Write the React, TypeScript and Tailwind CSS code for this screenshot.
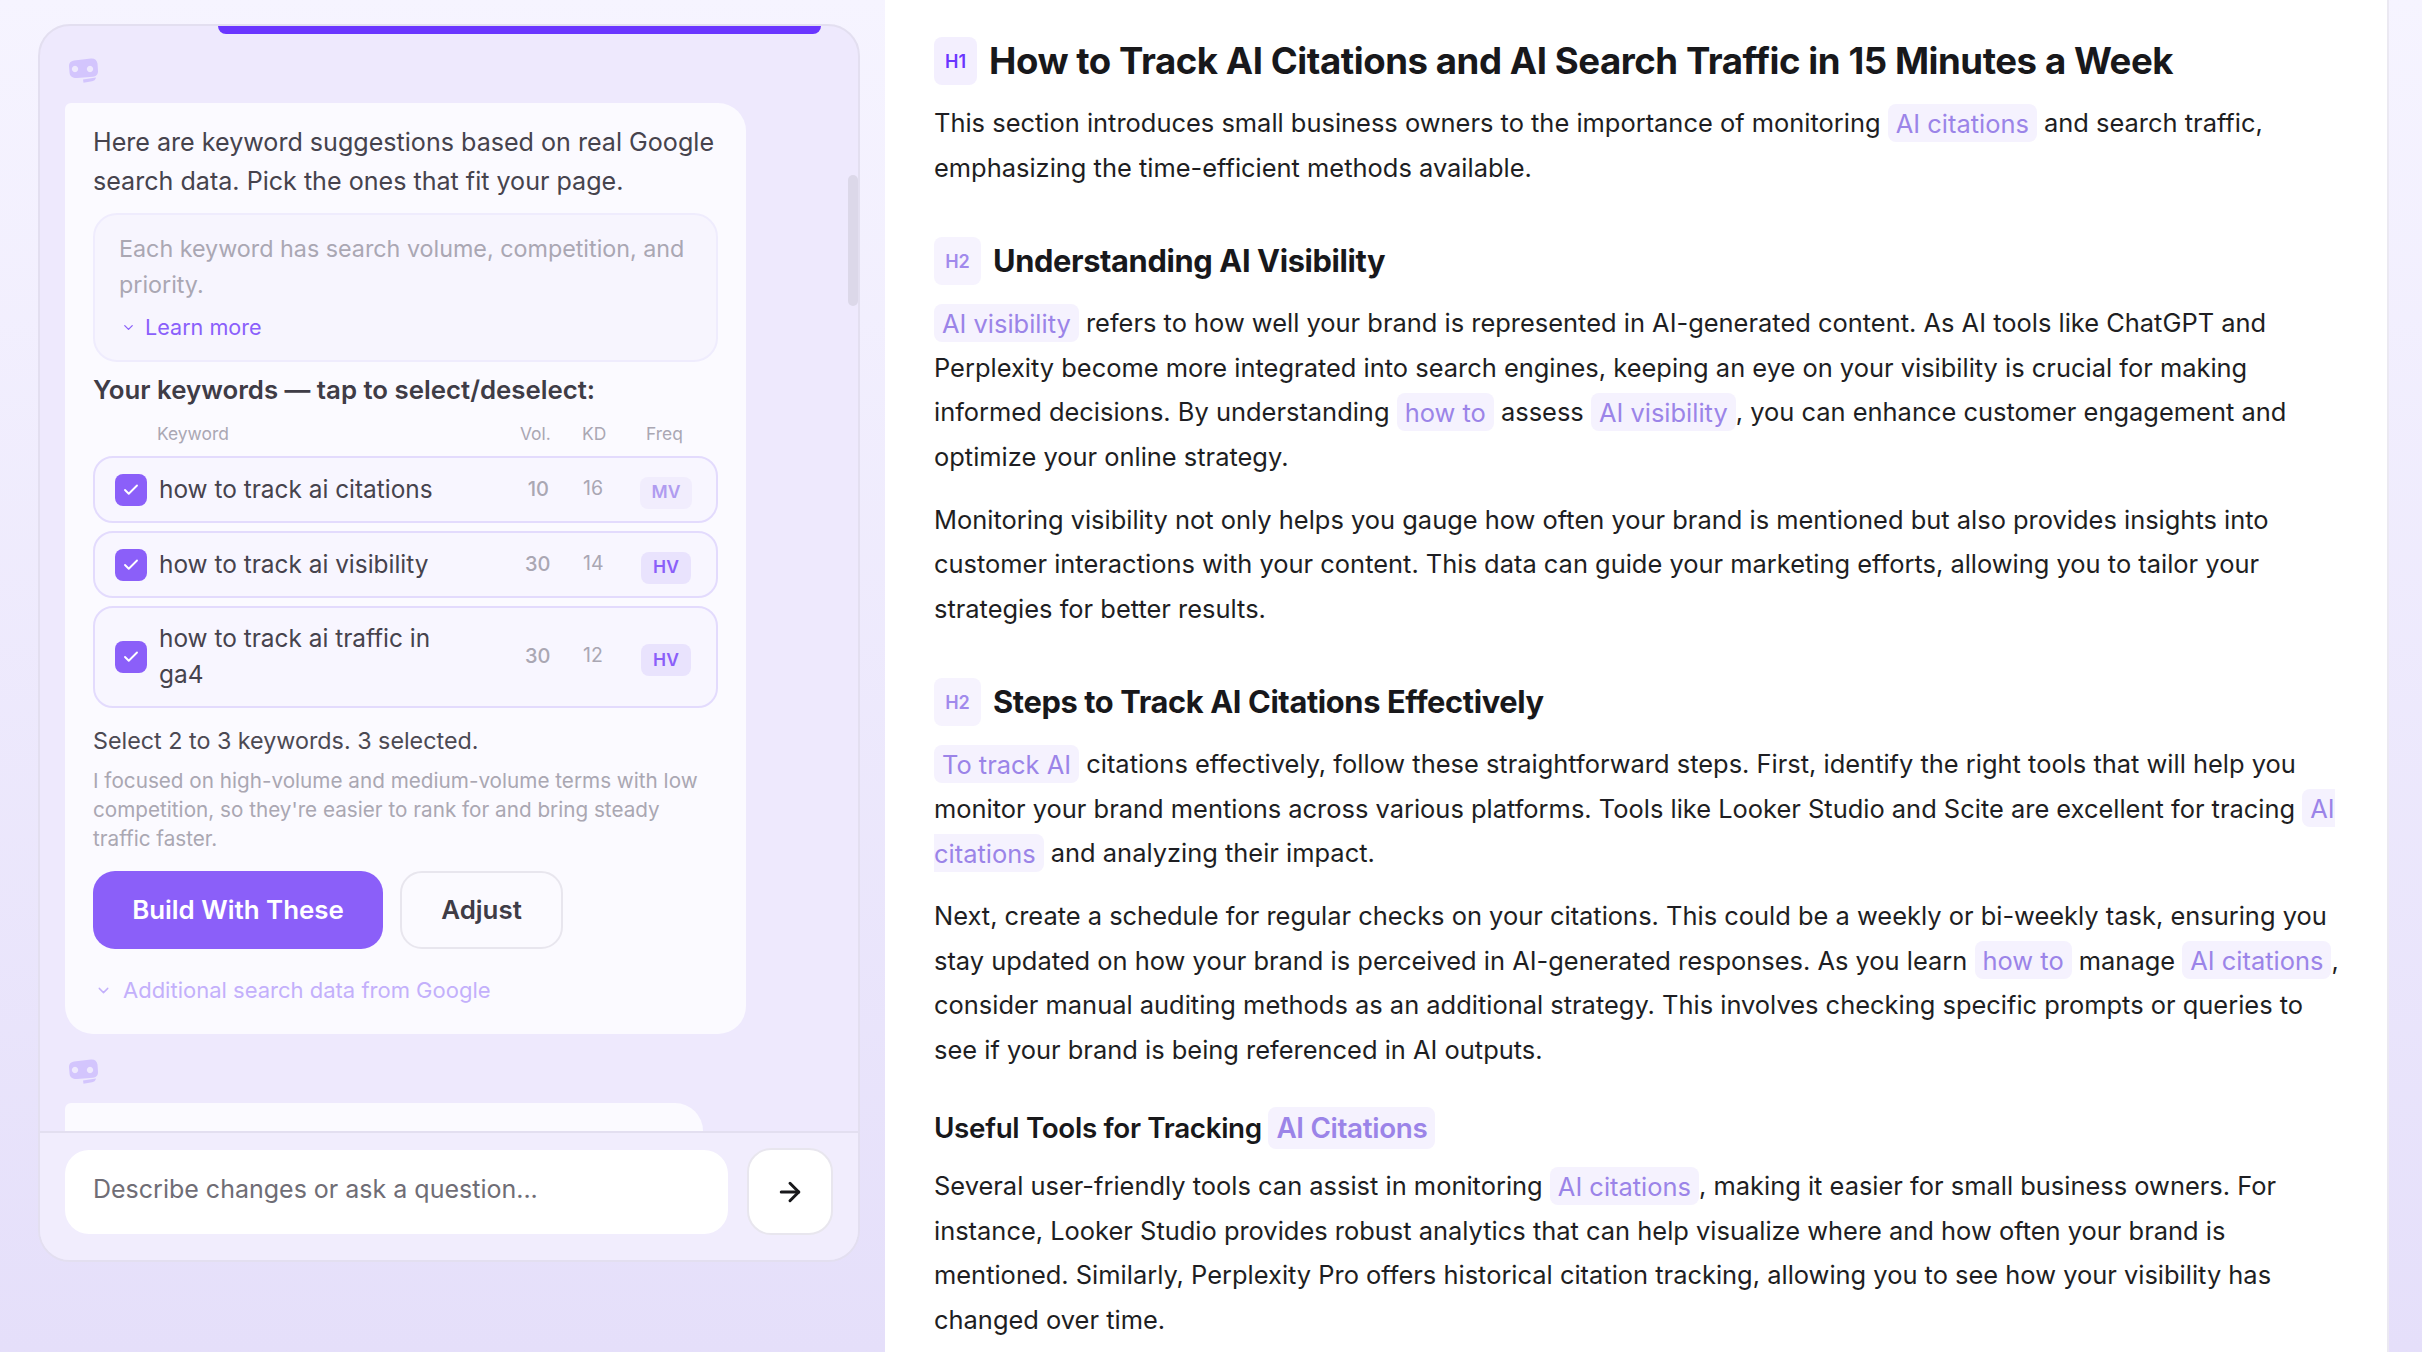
import { ArrowRight, ChevronDown, Check } from 'lucide-react'
import type { ReactNode } from 'react'

const keywords = [
  { id: 1, lines: ['how to track ai citations'], vol: 10, kd: 16, freq: 'MV' },
  { id: 2, lines: ['how to track ai visibility'], vol: 30, kd: 14, freq: 'HV' },
  { id: 3, lines: ['how to track ai traffic in', 'ga4'], vol: 30, kd: 12, freq: 'HV' },
]

function BotIcon() {
  return (
    <svg width="31" height="25" viewBox="0 0 31 25" className="ml-[28px] block">
      <path fillRule="evenodd" fill="#d3c5fd" d="M6 2.5 L23 0.5 C26.5 0.2 29 2 29.5 5.5 L30 13 C30.2 16.5 28 18.5 25 18.8 L9 20 C5 20.2 2 18.5 1.6 15 L1 8 C0.8 5 2.8 3 6 2.5 Z M7 7.8 a3.2 3.2 0 1 0 0.01 0 Z M22 7.8 a3.2 3.2 0 1 0 0.01 0 Z" />
      <path fill="#d3c5fd" d="M15 21.5 L28 19.5 C27.5 22 26 22.8 24 23.2 L15.5 24.8 Z" />
    </svg>
  )
}

function Chip({ children }: { children: ReactNode }) {
  return <span className="rounded-lg bg-[#f5f2fe] px-2 py-[3.5px] text-[#9b84e8]">{children}</span>
}

function Tag({ children, dim }: { children: string; dim?: boolean }) {
  return (
    <span className={`flex h-12 shrink-0 items-center justify-center rounded-lg text-[18px] font-semibold ${dim ? 'w-[47px] bg-[#f6f3fe] text-[#a18aec]' : 'w-[43px] bg-[#f3effe] text-[#6a35ff]'}`}>
      {children}
    </span>
  )
}

function Para({ children }: { children: ReactNode }) {
  return <p className="mb-[18.5px] whitespace-nowrap text-[25.45px] leading-[44.5px] text-[#1e1e22]">{children}</p>
}

function ChatPanel() {
  return (
    <div className="flex h-[1238px] w-[822px] flex-col overflow-hidden rounded-[32px] border-2 border-[#e3dff0] bg-[#eee9fd]">
      <div className="relative flex-1 overflow-hidden">
        <div className="ml-[178px] h-2 w-[603px] rounded-b-2xl bg-[#6a35ff]" />
        <div className="absolute right-0 top-[149px] h-[131px] w-[10px] rounded-full bg-[#dcd8e9]" />

        <div className="mt-[24px]"><BotIcon /></div>

        <div className="ml-[25px] mt-5 h-[931px] w-[681px] rounded-[28px] rounded-tl-md bg-[#fbfaff] px-7 pt-5">
          <p className="whitespace-nowrap text-[25.1px] leading-[39px] text-[#46434d]">
            Here are keyword suggestions based on real Google
            <br />
            search data. Pick the ones that fit your page.
          </p>

          <div className="mt-[12px] h-[149px] w-[625px] rounded-3xl border-2 border-[#efecfd] bg-[#f7f5fe] pl-[24px] pt-[16px]">
            <p className="whitespace-nowrap text-[23.3px] leading-[36px] text-[#aaa7b3]">
              Each keyword has search volume, competition, and
              <br />
              priority.
            </p>
            <div className="mt-[10px] flex items-center gap-[9px] pl-[2px] text-[21.6px] leading-[28px] text-[#8a5ffb]">
              <ChevronDown className="h-[15px] w-[15px]" strokeWidth={2} />
              Learn more
            </div>
          </div>

          <h4 className="mt-[12px] whitespace-nowrap text-[25.8px] font-semibold leading-[32px] text-[#3f3c46]">
            Your keywords — tap to select/deselect:
          </h4>

          <div className="mt-[16px] flex h-6 items-center text-[17.4px] text-[#aaa7b3]">
            <span className="ml-[64px] w-[363px]">Keyword</span>
            <span className="w-[62px]">Vol.</span>
            <span className="w-[64px]">KD</span>
            <span>Freq</span>
          </div>

          <div className="mt-[10px] flex w-[625px] flex-col gap-2">
            {keywords.map(k => (
              <div key={k.id} className="flex min-h-[67px] items-center rounded-[20px] border-2 border-[#e3dbfd] bg-[#f8f6ff] py-3 pl-[20px]">
                <span className="flex h-8 w-8 shrink-0 items-center justify-center rounded-lg bg-[#8b5ff9]">
                  <Check className="h-[18px] w-[18px] text-white" strokeWidth={2.5} />
                </span>
                <span className="ml-[12px] w-[366px] shrink-0 whitespace-nowrap pb-[2px] text-[24.4px] leading-[36px] text-[#46434d]">
                  {k.lines.map((line, i) => <div key={i}>{line}</div>)}
                </span>
                <span className="w-[24px] shrink-0 pb-[2px] text-right text-[20px] font-medium text-[#aaa7b3]">{k.vol}</span>
                <span className="ml-[34px] w-[30px] shrink-0 pb-[2px] text-[19.5px] text-[#aaa7b3]">{k.kd}</span>
                {k.freq === 'MV' ? (
                  <span className="ml-[27px] mt-[6px] flex h-8 w-[52px] shrink-0 items-center justify-center rounded-lg bg-[#f1edfd] text-[17.5px] font-semibold text-[#b09cf0]">{k.freq}</span>
                ) : (
                  <span className="ml-[28px] mt-[6px] flex h-8 w-[50px] shrink-0 items-center justify-center rounded-lg bg-[#e9e3fd] text-[17.5px] font-semibold text-[#8b5ff9]">{k.freq}</span>
                )}
              </div>
            ))}
          </div>

          <p className="mt-[18px] whitespace-nowrap text-[23.3px] leading-[30px] text-[#4c4953]">
            Select 2 to 3 keywords. 3 selected.
          </p>
          <p className="mt-[10px] whitespace-nowrap text-[20.7px] leading-[29px] text-[#aaa7b2]">
            I focused on high-volume and medium-volume terms with low
            <br />
            competition, so they're easier to rank for and bring steady
            <br />
            traffic faster.
          </p>

          <div className="mt-[18px] flex gap-[17px]">
            <button className="h-[78px] w-[290px] rounded-[22px] bg-[#8b5ff9] text-[25.9px] font-semibold text-white">Build With These</button>
            <button className="h-[78px] w-[163px] rounded-[22px] border-2 border-[#e8e6ee] bg-[#fbfaff] text-[25.9px] font-semibold text-[#3f3c46]">Adjust</button>
          </div>

          <div className="mt-[25px] flex items-center gap-[11px] pl-[2px] text-[22px] text-[#c3b0fb]">
            <ChevronDown className="h-[17px] w-[17px]" strokeWidth={2} />
            Additional search data from Google
          </div>
        </div>

        <div className="mt-[25px]"><BotIcon /></div>
        <div className="ml-[25px] mt-[19px] h-10 w-[638px] rounded-t-[28px] rounded-tl-md bg-[#fbfaff]" />
      </div>

      <div className="flex h-[129px] shrink-0 items-start border-t-2 border-[#e3dff0] bg-[#f1edfd] pl-[25px] pt-[17px]">
        <div className="flex h-[84px] w-[663px] items-center rounded-3xl bg-white pb-[5px] pl-7 text-[25px] text-[#6f6d75]">
          Describe changes or ask a question...
        </div>
        <button className="-mt-[2px] ml-[19px] flex h-[87px] w-[86px] items-center justify-center rounded-3xl border-2 border-[#e8e6ee] bg-white">
          <ArrowRight className="h-[30px] w-[30px] text-[#18181b]" strokeWidth={2.4} />
        </button>
      </div>
    </div>
  )
}

function Article() {
  return (
    <div className="h-[1352px] w-[1504px] shrink-0 overflow-hidden border-r-2 border-[#ebe9f2] bg-white pl-[49px] pt-[37px]">
      <div className="flex items-center gap-3">
        <Tag>H1</Tag>
        <h1 className="whitespace-nowrap text-[36.6px] font-bold leading-[48px] tracking-[-0.012em] text-[#18181b]">How to Track AI Citations and AI Search Traffic in 15 Minutes a Week</h1>
      </div>
      <div className="mt-[16px]">
        <Para>
          This section introduces small business owners to the importance of monitoring <Chip>AI citations</Chip> and search traffic,
          <br />
          emphasizing the time-efficient methods available.
        </Para>
      </div>

      <div className="mt-[47px] flex items-center gap-3">
        <Tag dim>H2</Tag>
        <h2 className="whitespace-nowrap text-[30.8px] font-bold leading-[48px] tracking-[-0.012em] text-[#18181b]">Understanding AI Visibility</h2>
      </div>
      <div className="mt-[16px]">
        <Para>
          <Chip>AI visibility</Chip> refers to how well your brand is represented in AI-generated content. As AI tools like ChatGPT and
          <br />
          Perplexity become more integrated into search engines, keeping an eye on your visibility is crucial for making
          <br />
          informed decisions. By understanding <Chip>how to</Chip> assess <Chip>AI visibility</Chip>, you can enhance customer engagement and
          <br />
          optimize your online strategy.
        </Para>
        <Para>
          Monitoring visibility not only helps you gauge how often your brand is mentioned but also provides insights into
          <br />
          customer interactions with your content. This data can guide your marketing efforts, allowing you to tailor your
          <br />
          strategies for better results.
        </Para>
      </div>

      <div className="mt-[47px] flex items-center gap-3">
        <Tag dim>H2</Tag>
        <h2 className="whitespace-nowrap text-[30.8px] font-bold leading-[48px] tracking-[-0.012em] text-[#18181b]">Steps to Track AI Citations Effectively</h2>
      </div>
      <div className="mt-[16px]">
        <Para>
          <Chip>To track AI</Chip> citations effectively, follow these straightforward steps. First, identify the right tools that will help you
          <br />
          monitor your brand mentions across various platforms. Tools like Looker Studio and Scite are excellent for tracing <Chip>AI<br />citations</Chip> and analyzing their impact.
        </Para>
        <Para>
          Next, create a schedule for regular checks on your citations. This could be a weekly or bi-weekly task, ensuring you
          <br />
          stay updated on how your brand is perceived in AI-generated responses. As you learn <Chip>how to</Chip> manage <Chip>AI citations</Chip>,
          <br />
          consider manual auditing methods as an additional strategy. This involves checking specific prompts or queries to
          <br />
          see if your brand is being referenced in AI outputs.
        </Para>
      </div>

      <h3 className="mt-[34px] whitespace-nowrap text-[27.8px] font-semibold leading-[44px] tracking-[-0.012em] text-[#18181b]">
        Useful Tools for Tracking <span className="rounded-lg bg-[#f5f2fe] px-2 py-1 text-[#9b84e8]">AI Citations</span>
      </h3>
      <div className="mt-[14px]">
        <Para>
          Several user-friendly tools can assist in monitoring <Chip>AI citations</Chip>, making it easier for small business owners. For
          <br />
          instance, Looker Studio provides robust analytics that can help visualize where and how often your brand is
          <br />
          mentioned. Similarly, Perplexity Pro offers historical citation tracking, allowing you to see how your visibility has
          <br />
          changed over time.
        </Para>
      </div>
    </div>
  )
}

export default function App() {
  return (
    <div className="flex h-[1352px] w-[2422px] overflow-hidden bg-gradient-to-b from-[#f6f4ff] to-[#e5dffa] font-['Inter',sans-serif]">
      <div className="w-[885px] shrink-0 pl-[38px] pt-[24px]">
        <ChatPanel />
      </div>
      <Article />
    </div>
  )
}
